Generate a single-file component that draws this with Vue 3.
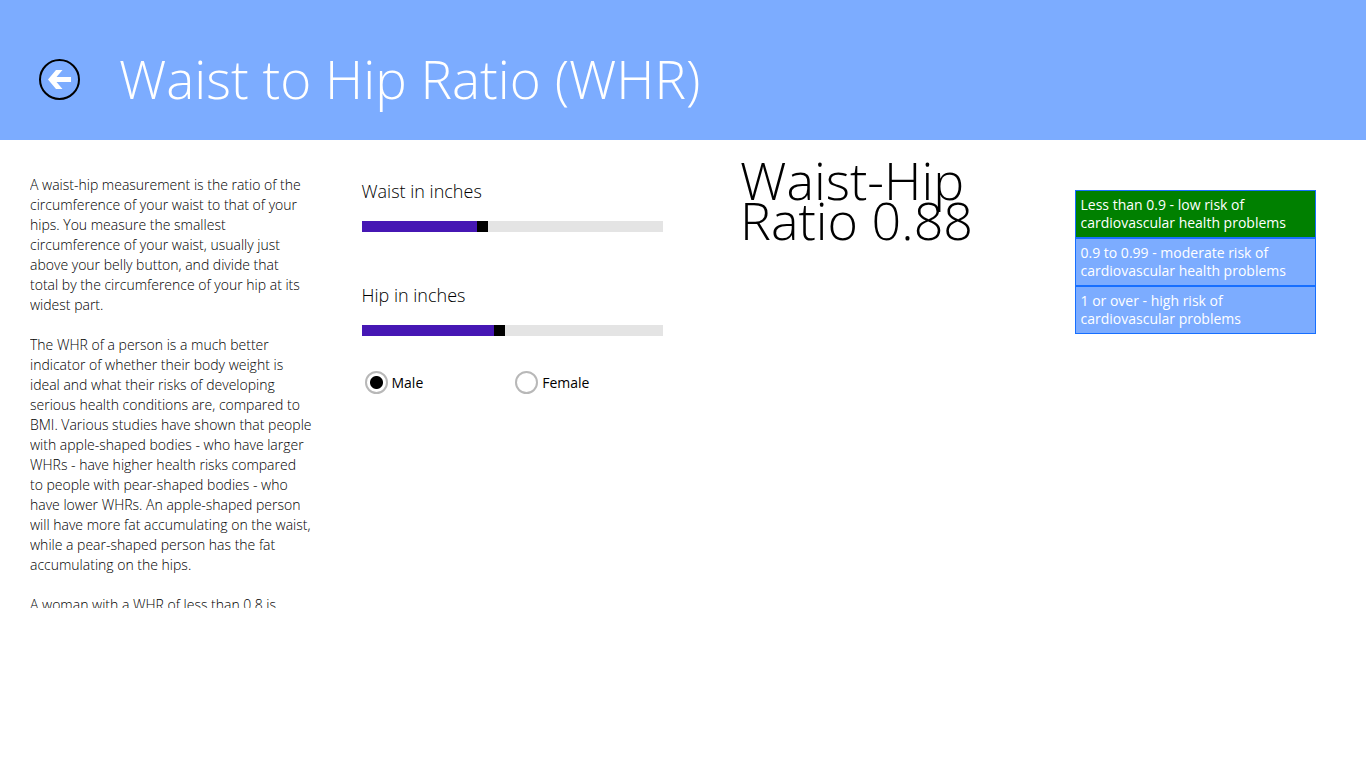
<script setup>
import { computed, ref } from 'vue'

const SLIDER_MAX = 88
const waist = ref(35)
const hip = ref(40)
const sex = ref('male')

const description = [
  [
    'A waist-hip measurement is the ratio of the',
    'circumference of your waist to that of your',
    'hips. You measure the smallest',
    'circumference of your waist, usually just',
    'above your belly button, and divide that',
    'total by the circumference of your hip at its',
    'widest part.',
  ],
  [
    'The WHR of a person is a much better',
    'indicator of whether their body weight is',
    'ideal and what their risks of developing',
    'serious health conditions are, compared to',
    'BMI. Various studies have shown that people',
    'with apple-shaped bodies - who have larger',
    'WHRs - have higher health risks compared',
    'to people with pear-shaped bodies - who',
    'have lower WHRs. An apple-shaped person',
    'will have more fat accumulating on the waist,',
    'while a pear-shaped person has the fat',
    'accumulating on the hips.',
  ],
  ['A woman with a WHR of less than 0.8 is'],
]

const risks = [
  ['Less than 0.9 - low risk of', 'cardiovascular health problems'],
  ['0.9 to 0.99 - moderate risk of', 'cardiovascular health problems'],
  ['1 or over - high risk of', 'cardiovascular problems'],
]

const ratio = computed(() => (hip.value > 0 ? waist.value / hip.value : 0))
const level = computed(() => (ratio.value < 0.9 ? 0 : ratio.value < 1 ? 1 : 2))
const fill = (value) => ({ '--fill': `${(value / SLIDER_MAX) * 100}%` })
</script>

<template>
  <div class="page">
    <header class="header">
      <button class="back" type="button" aria-label="Back">
        <svg width="41" height="41" viewBox="0 0 41 41" aria-hidden="true">
          <circle cx="20.5" cy="20.5" r="19.5" fill="none" stroke="#000" stroke-width="2" />
          <path d="M9 20.500 17 11h6.500L17.500 18H32v5H17.500l6 7H17z" fill="#fff" />
        </svg>
      </button>
      <h1 class="title">Waist to Hip Ratio (WHR)</h1>
    </header>

    <main class="content">
      <section class="description">
        <p v-for="(lines, i) in description" :key="i">{{ lines.join('\n') }}</p>
      </section>

      <form class="controls" @submit.prevent>
        <div class="field">
          <label for="waist">Waist in inches</label>
          <input id="waist" v-model.number="waist" class="slider" type="range" min="0" :max="SLIDER_MAX" :style="fill(waist)" />
        </div>
        <div class="field">
          <label for="hip">Hip in inches</label>
          <input id="hip" v-model.number="hip" class="slider" type="range" min="0" :max="SLIDER_MAX" :style="fill(hip)" />
        </div>
        <div class="choices">
          <label class="choice" for="male">
            <input id="male" v-model="sex" type="radio" name="sex" value="male" />
            <span>Male</span>
          </label>
          <label class="choice" for="female">
            <input id="female" v-model="sex" type="radio" name="sex" value="female" />
            <span>Female</span>
          </label>
        </div>
      </form>

      <section class="result">
        <h2>Waist-Hip<br />Ratio {{ ratio.toFixed(2) }}</h2>
      </section>

      <section class="levels">
        <ul>
          <li v-for="(lines, i) in risks" :key="i" :class="{ active: i === level }">{{ lines.join('\n') }}</li>
        </ul>
      </section>
    </main>
  </div>
</template>

<style>
html,
body {
  margin: 0;
  background: #fff;
}
</style>

<style scoped>
.page {
  min-height: 100vh;
  font-family: "Open Sans", "Noto Sans", sans-serif;
  color: #000;
}

.header {
  display: flex;
  align-items: center;
  gap: 39px;
  height: 140px;
  padding: 18px 39px 0;
  box-sizing: border-box;
  background: #7cacff;
}

.back {
  width: 41px;
  height: 41px;
  padding: 0;
  border: 0;
  background: none;
}

.back svg {
  display: block;
}

.title {
  margin: 0;
  font-size: 53px;
  font-weight: 300;
  line-height: 60px;
  color: #fff;
  white-space: nowrap;
}

.content {
  display: grid;
  grid-template-columns: repeat(4, minmax(0, 1fr));
  align-items: start;
}

.description {
  max-height: calc(100vh - 335px);
  margin: 35px 20px 0 30px;
  overflow: hidden;
  font-size: 14px;
  font-weight: 300;
  line-height: 20px;
  white-space: pre;
}

.description p {
  margin: 0 0 20px;
}

.controls {
  padding: 36px 20px 0;
}

.field {
  display: flex;
  flex-direction: column;
  gap: 15px;
  height: 104px;
}

.field label {
  font-size: 18px;
  font-weight: 300;
  line-height: 30px;
}

.slider {
  appearance: none;
  width: 100%;
  height: 11px;
  margin: 0;
  background: linear-gradient(#4617b4, #4617b4) 0 0 / var(--fill) 100% no-repeat #e4e4e4;
}

.slider::-webkit-slider-thumb {
  appearance: none;
  width: 11px;
  height: 11px;
  background: #000;
}

.choices {
  display: grid;
  grid-template-columns: 1fr 1fr;
  margin-top: -13px;
}

.choice {
  display: flex;
  align-items: center;
  gap: 4px;
  padding-left: 3px;
  font-size: 14px;
  line-height: 20px;
}

.choice input {
  appearance: none;
  box-sizing: border-box;
  width: 23px;
  height: 23px;
  margin: 0;
  border: 2px solid #b8b8b8;
  border-radius: 50%;
  background: #fff;
}

.choice input:checked {
  background: radial-gradient(circle, #000 6px, #fff 7px);
}

.result {
  padding: 20px 0 0 57px;
}

.result h2 {
  margin: 0;
  font-size: 52px;
  font-weight: 300;
  line-height: 40px;
  white-space: nowrap;
}

.levels {
  padding: 50px 50px 0;
}

.levels ul {
  margin: 0;
  padding: 0;
  list-style: none;
}

.levels li {
  padding: 5px;
  border: 1px solid #176fff;
  background: #7cacff;
  font-size: 14px;
  line-height: 18px;
  color: #fff;
  white-space: pre;
}

.levels li.active {
  background: #008000;
}
</style>
